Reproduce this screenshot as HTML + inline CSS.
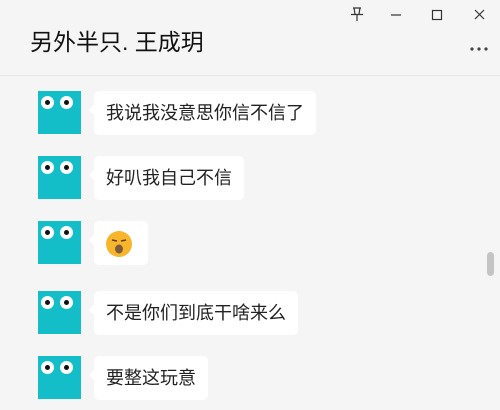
<html><head><style>
body{margin:0;width:500px;height:410px;background:#f5f5f5;font-family:"Liberation Sans","Noto Sans CJK SC",sans-serif;position:relative;overflow:hidden}
.t{position:absolute;left:30px;top:23px;font-size:23px;color:#111}
.hl{position:absolute;left:0;top:75px;width:500px;height:1px;background:#e4e4e4}
.av{position:absolute;left:38px;width:43px;height:43px;background:#13bec8}
.av i{position:absolute;top:5px;width:13px;height:13px;border-radius:50%;background:#fff}
.av i:before{content:"";position:absolute;left:4px;top:4px;width:5px;height:5px;border-radius:50%;background:#111}
.b{position:absolute;left:94px;height:44px;background:#fff;border-radius:5px;font-size:18px;line-height:44px;padding:0 12px;color:#222}
.b:before{content:"";position:absolute;left:-5px;top:14px;border:5px solid transparent;border-right-color:#fff;border-left:0}
.sb{position:absolute;left:487px;top:252px;width:7px;height:24px;border-radius:4px;background:#c4c4c4}
</style></head><body>
<div class="t">另外半只. 王成玥</div>
<svg style="position:absolute;left:0;top:0" width="500" height="60">
<g stroke="#333" stroke-width="1.2" fill="none">
<path d="M353 8h8M354 8l1 6M360 8l-1 6M351 14.5h12M357 15v6"/>
<path d="M391 15h10"/>
<rect x="432.5" y="10.5" width="9" height="9"/>
<path d="M475 10l9 9M484 10l-9 9"/>
</g>
<g fill="#444"><circle cx="472" cy="49" r="1.6"/><circle cx="479" cy="49" r="1.6"/><circle cx="486" cy="49" r="1.6"/></g>
</svg>
<div class="hl"></div>
<div class="av" style="top:91px"><i style="left:3px"></i><i style="left:22px"></i></div>
<div class="b" style="top:91px">我说我没意思你信不信了</div>
<div class="av" style="top:156px"><i style="left:3px"></i><i style="left:22px"></i></div>
<div class="b" style="top:156px">好叭我自己不信</div>
<div class="av" style="top:221px"><i style="left:3px"></i><i style="left:22px"></i></div>
<div class="b" style="top:221px;width:30px;padding:0 12px"><svg style="position:absolute;left:11px;top:9px" width="28" height="28"><circle cx="14" cy="14" r="13" fill="#f7b52c"/><path d="M7 10l5 1M21 10l-5 1" stroke="#6b3a10" stroke-width="1.5"/><ellipse cx="14" cy="19" rx="4" ry="4.5" fill="#7a5a3a"/></svg></div>
<div class="av" style="top:291px"><i style="left:3px"></i><i style="left:22px"></i></div>
<div class="b" style="top:291px">不是你们到底干啥来么</div>
<div class="av" style="top:356px"><i style="left:3px"></i><i style="left:22px"></i></div>
<div class="b" style="top:356px">要整这玩意</div>
<div class="sb"></div>
</body></html>
